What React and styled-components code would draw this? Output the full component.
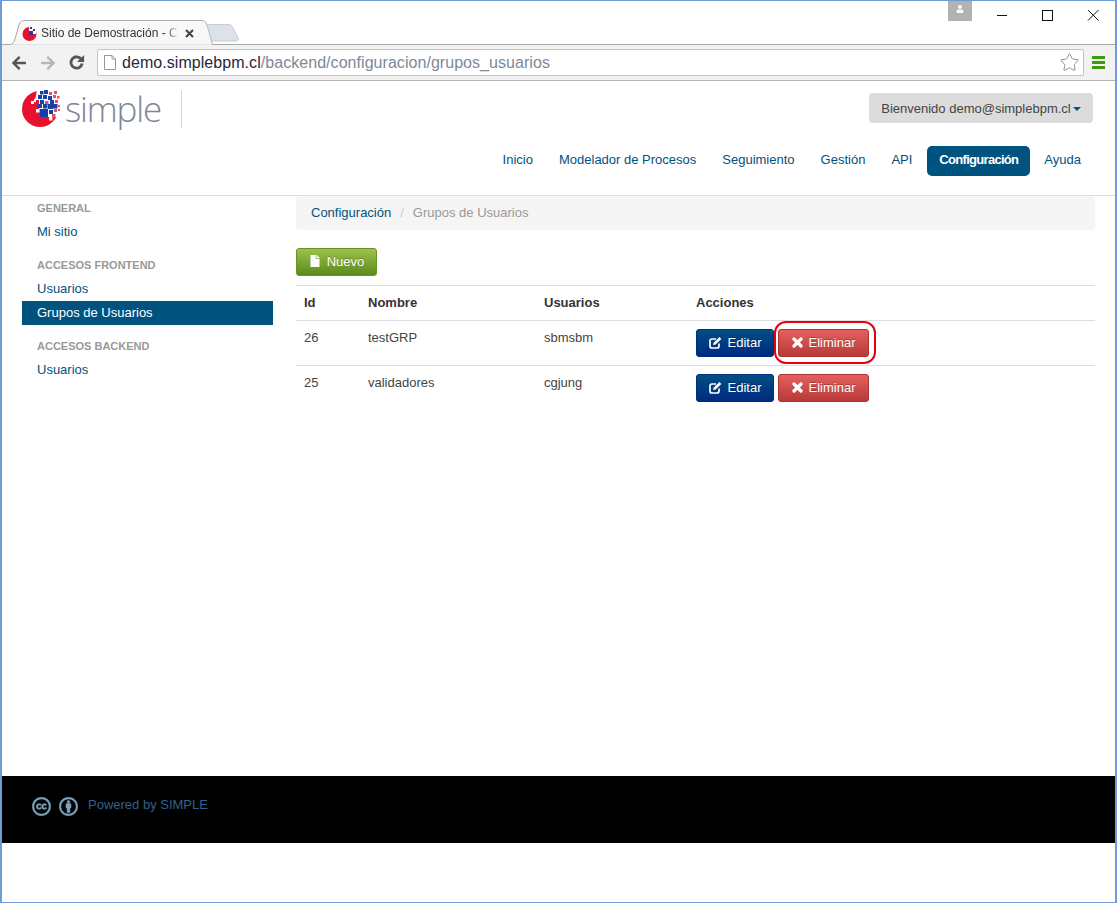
import React from 'react';
import styled, { createGlobalStyle } from 'styled-components';
import { Star } from 'lucide-react';
import { FaArrowLeft, FaArrowRight, FaCreativeCommons, FaCreativeCommonsBy, FaFile, FaUser } from 'react-icons/fa';

const navItems = ['Inicio', 'Modelador de Procesos', 'Seguimiento', 'Gestión', 'API', 'Configuración', 'Ayuda'];

const groups = [
    { id: 26, nombre: 'testGRP', usuarios: 'sbmsbm', marked: true },
    { id: 25, nombre: 'validadores', usuarios: 'cgjung', marked: false },
];

// logo squares: x, y, size, colour
const BLUE = '#1a3fa8';
const PINK = '#ee5068';
const pixels = [
    [18, 1, 3.5, BLUE], [22, 0, 4, BLUE], [27, 2, 3, PINK], [32, 1, 3, PINK],
    [16, 5, 4, BLUE], [21, 5, 4, BLUE], [26, 6, 4, BLUE], [31, 5, 3, PINK], [35, 6, 2.5, PINK],
    [14, 10, 3, '#c51f45'], [18, 10, 4, BLUE], [23, 11, 3.5, PINK], [28, 10, 4, BLUE], [33, 10, 3, PINK],
    [16, 14, 4, BLUE], [21, 14, 4.5, BLUE], [26, 14, 5, BLUE], [31, 14, 4.5, BLUE], [36, 15, 2, PINK],
    [27, 20, 4, BLUE], [32, 19, 3, PINK], [36, 19, 2, PINK], [30, 24, 3.5, PINK],
];

const GlobalStyle = createGlobalStyle`
    html, body {
        margin: 0;
        padding: 0;
        background: #fff;
    }

    body {
        font-family: "Liberation Sans", Arial, sans-serif;
        font-size: 13px;
        color: #333;
    }
`;

const Frame = styled.div`
    box-sizing: border-box;
    width: 1117px;
    height: 903px;
    display: flex;
    flex-direction: column;
    border: 1px solid #6f9bd9;
    border-width: 1px 2px 1px 2px;
    background: #fff;
`;

const TitleBar = styled.div`
    height: 43px;
    flex: none;
    display: flex;
    align-items: flex-end;
    padding-left: 6px;
    position: relative;
`;

const TabShape = styled.svg`
    position: absolute;
    left: 5px;
    bottom: -1px;
`;

const NewTab = styled.svg`
    position: absolute;
    left: 204px;
    bottom: 2px;
`;

const Tab = styled.div`
    position: relative;
    height: 24px;
    box-sizing: border-box;
    padding-top: 2px;
    margin-left: 14px;
    display: flex;
    align-items: center;
    gap: 4px;
    font-size: 12px;
    color: #333;
`;

const TabTitle = styled.span`
    width: 137px;
    overflow: hidden;
    white-space: nowrap;
    -webkit-mask-image: linear-gradient(to right, #000 126px, transparent 137px);
    mask-image: linear-gradient(to right, #000 126px, transparent 137px);
`;

const TabClose = styled.svg`
    margin-left: 3px;
`;

const WindowControls = styled.div`
    position: absolute;
    top: 0;
    right: 0;
    display: flex;
    align-items: flex-start;
`;

const Profile = styled.div`
    width: 24px;
    height: 20px;
    margin-right: 5px;
    background: #b2b2b2;
    color: #fff;
    display: flex;
    justify-content: center;
    padding-top: 4px;
    box-sizing: border-box;
    font-size: 8px;
`;

const WindowButton = styled.svg`
    display: block;
    width: 46px;
    height: 28px;
`;

const Toolbar = styled.div`
    height: 37px;
    flex: none;
    box-sizing: border-box;
    display: flex;
    align-items: center;
    padding: 0 10px 0 9px;
    background: #f2f2f2;
    border-top: 1px solid #a9a9a9;
    border-bottom: 1px solid #b4b4b4;
`;

const ToolIcon = styled.span`
    width: 28.7px;
    flex: none;
    display: flex;
    align-items: center;
    color: ${p => p.$muted ? '#b5b5b5' : '#555'};
    font-size: 16px;
`;

const AddressBar = styled.div`
    flex: 1;
    height: 27px;
    box-sizing: border-box;
    margin-right: 8px;
    display: flex;
    align-items: center;
    padding: 0 3px 0 6px;
    background: #fff;
    border: 1px solid #c4c4c4;
    border-radius: 2px;
    font-size: 16px;
    letter-spacing: 0.05px;
`;

const Host = styled.span`
    color: #1f2a38;
    margin-left: 6px;
`;

const UrlPath = styled.span`
    color: #7c8a99;
    flex: 1;
`;

const StarIcon = styled(Star)`
    color: #8d8d8d;
`;

const Menu = styled.div`
    width: 13px;
    display: flex;
    flex-direction: column;
    gap: 2px;

    i {
        display: block;
        height: 3px;
        background: #3f9a0c;
    }
`;

const Header = styled.header`
    height: 115px;
    flex: none;
    box-sizing: border-box;
    padding: 9px 22px 0 20px;
    border-bottom: 1px solid #ddd;
`;

const TopRow = styled.div`
    display: flex;
    align-items: flex-start;
    justify-content: space-between;
`;

const Logo = styled.div`
    display: flex;
    align-items: center;
    height: 38px;
`;

const LogoText = styled.span`
    font-family: "Open Sans", sans-serif;
    font-weight: 300;
    font-size: 35px;
    letter-spacing: -1.2px;
    line-height: 37px;
    padding-bottom: 1px;
    color: #7f8696;
    margin-left: 3px;
    padding-right: 20px;
    border-right: 1px solid #d5d5d5;
`;

const UserButton = styled.div`
    margin-top: 3px;
    height: 30px;
    width: 224px;
    box-sizing: border-box;
    display: flex;
    align-items: center;
    justify-content: center;
    background: #dcdcdc;
    border-radius: 4px;
    color: #444;
`;

const Caret = styled.span`
    margin-left: 2px;
    margin-top: 2px;
    border-top: 4px solid #00527f;
    border-left: 4px solid transparent;
    border-right: 4px solid transparent;
`;

const Nav = styled.nav`
    display: flex;
    justify-content: flex-end;
    gap: 2px;
    margin-top: 18px;
`;

const NavItem = styled.a`
    height: 30px;
    box-sizing: border-box;
    padding: 0 12px;
    margin-left: ${p => p.$active ? '1px' : '0'};
    line-height: 28px;
    border-radius: 5px;
    color: ${p => p.$active ? '#fff' : '#00527f'};
    background: ${p => p.$active ? '#00527f' : 'transparent'};
    font-weight: ${p => p.$active ? 'bold' : 'normal'};
    letter-spacing: ${p => p.$active ? '-0.7px' : '0'};
`;

const Body = styled.div`
    flex: 1;
    display: flex;
    gap: 23px;
    padding: 0 20px;
`;

const Sidebar = styled.aside`
    width: 251px;
    flex: none;
    padding-top: 4px;
`;

const SideTitle = styled.div`
    height: 16px;
    line-height: 16px;
    margin-top: ${p => p.$first ? '0' : '13px'};
    padding-left: 15px;
    font-size: 11px;
    font-weight: bold;
    color: #999;
`;

const SideLink = styled.a`
    display: block;
    height: 24px;
    line-height: 24px;
    margin-top: ${p => p.$tight ? '0' : '4px'};
    padding-left: 15px;
    color: ${p => p.$active ? '#fff' : '#00527f'};
    background: ${p => p.$active ? '#00527f' : 'transparent'};
`;

const Main = styled.main`
    flex: 1;
`;

const Breadcrumb = styled.div`
    height: 34px;
    box-sizing: border-box;
    display: flex;
    align-items: center;
    padding: 0 0 2px 15px;
    background: #f5f5f5;
    border-radius: 4px;
    color: #999;
`;

const Crumb = styled.a`
    color: #00527f;
`;

const Divider = styled.span`
    color: #ccc;
    margin: 0 9px;
`;

const Button = styled.a`
    display: inline-flex;
    align-items: center;
    justify-content: center;
    box-sizing: border-box;
    gap: 6px;
    height: 28px;
    padding-bottom: 2px;
    border-radius: 3px;
    color: #fff;
    font-size: 13px;
    text-shadow: 0 -1px 0 rgba(0, 0, 0, 0.25);
    border: 1px solid ${p => p.$border};
    background: linear-gradient(to bottom, ${p => p.$from}, ${p => p.$to});
    width: ${p => p.$width}px;
`;

const FileIcon = styled(FaFile)`
    font-size: 12px;
`;

const Toolrow = styled.div`
    margin-top: 18px;
    height: 37px;
`;

const Table = styled.table`
    width: 100%;
    border-collapse: collapse;
    font-size: 13px;

    th {
        text-align: left;
        height: 35px;
        padding: 0 8px 2px;
        box-sizing: border-box;
        font-weight: bold;
        border-top: 1px solid #ddd;
        color: #333;
    }

    td {
        height: 45px;
        padding: 9px 8px 0;
        box-sizing: border-box;
        vertical-align: top;
        border-top: 1px solid #ddd;
        color: #444;
    }
`;

const IdHead = styled.th`
    width: 64px;
`;

const NameHead = styled.th`
    width: 176px;
`;

const UsersHead = styled.th`
    width: 152px;
`;

const Actions = styled.div`
    display: flex;
    gap: 4px;
    margin-top: -1px;
`;

const Marked = styled.div`
    position: relative;

    &::after {
        content: '';
        position: absolute;
        inset: -8px -7px -7px -4px;
        border: 2px solid #e8000d;
        border-radius: 12px;
    }
`;

const Footer = styled.footer`
    height: 67px;
    flex: none;
    margin-bottom: 59px;
    box-sizing: border-box;
    display: flex;
    align-items: flex-start;
    padding: 21px 0 0 30px;
    background: #000;
    color: #31618f;
`;

const LicenseIcons = styled.div`
    display: flex;
    gap: 8px;
    margin-right: 10px;
    font-size: 19px;
    color: #7ba3bf;

    svg {
        stroke: currentColor;
        stroke-width: 14;
    }
`;

const Logomark = () => (
    <svg width="40" height="38" viewBox="0 0 40 38">
        <circle cx="18" cy="19" r="18" fill="#e8112d" />
        <path d="M15 0 H40 V27 H26 V19 H17 V10 H13 Z" fill="#fff" />
        <rect x="12" y="9" width="3" height="3" fill="#fff" />
        <rect x="9" y="11" width="3" height="3" fill="#fff" />
        <rect x="14" y="19" width="3.5" height="3.5" fill="#fff" />
        <rect x="27" y="27" width="3.5" height="3.5" fill="#fff" />
        {pixels.map(([x, y, size, fill]) => (
            <rect key={`${x}-${y}`} x={x} y={y} width={size} height={size} fill={fill} />
        ))}
        <rect x="18" y="19" width="8" height="8" fill="#0f3fa8" />
    </svg>
);

const Favicon = () => (
    <svg width="15" height="15" viewBox="0 0 15 15">
        <circle cx="7.5" cy="8" r="7" fill="#e8112d" />
        <rect x="7" y="1" width="7" height="7" fill="#fff" />
        <rect x="8" y="1" width="2" height="2" fill="#1c3f9e" />
        <rect x="11" y="3" width="2" height="2" fill="#1c3f9e" />
        <rect x="7" y="5" width="4" height="4" fill="#1c3f9e" />
    </svg>
);

const EditIcon = () => (
    <svg width="13" height="13" viewBox="0 0 13 13">
        <path d="M10 7.5 V10 A2 2 0 0 1 8 12 H3 A2 2 0 0 1 1 10 V5 A2 2 0 0 1 3 3 H7" fill="none" stroke="#fff" strokeWidth="1.7" />
        <path d="M4 9 L4.6 6.8 L10.4 1 L12.4 3 L6.6 8.6 Z" fill="#fff" />
    </svg>
);

const CrossIcon = () => (
    <svg width="11" height="11" viewBox="0 0 11 11">
        <path d="M2 2 L9 9 M9 2 L2 9" stroke="#fff" strokeWidth="3.2" strokeLinecap="round" />
    </svg>
);

const App = () => {
    const renderActions = row => {
        const remove = (
            <Button $width={91} $border="#a93533" $from="#e4605e" $to="#b73a38">
                <CrossIcon /> Eliminar
            </Button>
        );
        return (
            <Actions>
                <Button $width={78} $border="#00307a" $from="#004f83" $to="#002a80">
                    <EditIcon /> Editar
                </Button>
                {row.marked ? <Marked>{remove}</Marked> : remove}
            </Actions>
        );
    };

    return (
        <Frame>
            <GlobalStyle />
            <TitleBar>
                <TabShape width="206" height="25" viewBox="0 0 206 25">
                    <path d="M0 24.5 H3 C6 24.5 7 22 8 19 L12 5 C13 2 14 .5 18 .5 H194 C198 .5 199 2 200 5 L204 19 C205 22 205 24.5 206 24.5" fill="#f8f8f8" stroke="#a9a9a9" />
                    <path d="M4 25 H205" stroke="#f8f8f8" />
                </TabShape>
                <NewTab width="34" height="18" viewBox="0 0 34 18">
                    <path d="M1 .5 H22 C25 .5 26 2 27 4 L32 14 C33 16 32 17 30 17 H8 C6 17 5 16 5 14 Z" fill="#dde1e8" stroke="#c8ccd3" />
                </NewTab>
                <Tab>
                    <Favicon />
                    <TabTitle>Sitio de Demostración - C</TabTitle>
                    <TabClose width="9" height="9" viewBox="0 0 9 9">
                        <path d="M1 1 L8 8 M8 1 L1 8" stroke="#444" strokeWidth="2" />
                    </TabClose>
                </Tab>
                <WindowControls>
                    <Profile><FaUser /></Profile>
                    <WindowButton viewBox="0 0 46 28">
                        <path d="M20 14.5 H30" stroke="#111" />
                    </WindowButton>
                    <WindowButton viewBox="0 0 46 28">
                        <rect x="19.5" y="9.5" width="10" height="10" fill="none" stroke="#111" />
                    </WindowButton>
                    <WindowButton viewBox="0 0 46 28">
                        <path d="M19 9 L29.5 19.5 M29.5 9 L19 19.5" stroke="#111" />
                    </WindowButton>
                </WindowControls>
            </TitleBar>
            <Toolbar>
                <ToolIcon><FaArrowLeft /></ToolIcon>
                <ToolIcon $muted><FaArrowRight /></ToolIcon>
                <ToolIcon>
                    <svg width="17" height="17" viewBox="0 0 18 18">
                        <path d="M14 5.5 A6 6 0 1 0 15 10" fill="none" stroke="#555" strokeWidth="3" />
                        <path d="M17 1 V8.5 H9.5 Z" fill="#555" />
                    </svg>
                </ToolIcon>
                <AddressBar>
                    <svg width="12" height="15" viewBox="0 0 12 15">
                        <path d="M.5 .5 H8 L11.5 4 V14.5 H.5 Z M8 .5 V4 H11.5" fill="#fff" stroke="#999" />
                    </svg>
                    <Host>demo.simplebpm.cl</Host>
                    <UrlPath>/backend/configuracion/grupos_usuarios</UrlPath>
                    <StarIcon size={21} strokeWidth={1.1} />
                </AddressBar>
                <Menu><i /><i /><i /></Menu>
            </Toolbar>
            <Header>
                <TopRow>
                    <Logo>
                        <Logomark />
                        <LogoText>simple</LogoText>
                    </Logo>
                    <UserButton>Bienvenido demo@simplebpm.cl<Caret /></UserButton>
                </TopRow>
                <Nav>
                    {navItems.map(item => (
                        <NavItem key={item} $active={item === 'Configuración'}>{item}</NavItem>
                    ))}
                </Nav>
            </Header>
            <Body>
                <Sidebar>
                    <SideTitle $first>GENERAL</SideTitle>
                    <SideLink>Mi sitio</SideLink>
                    <SideTitle>ACCESOS FRONTEND</SideTitle>
                    <SideLink>Usuarios</SideLink>
                    <SideLink $tight $active>Grupos de Usuarios</SideLink>
                    <SideTitle>ACCESOS BACKEND</SideTitle>
                    <SideLink>Usuarios</SideLink>
                </Sidebar>
                <Main>
                    <Breadcrumb>
                        <Crumb>Configuración</Crumb>
                        <Divider>/</Divider>
                        Grupos de Usuarios
                    </Breadcrumb>
                    <Toolrow>
                        <Button $width={81} $border="#6a9226" $from="#9cc24a" $to="#5c8a1c">
                            <FileIcon /> Nuevo
                        </Button>
                    </Toolrow>
                    <Table>
                        <thead>
                            <tr>
                                <IdHead>Id</IdHead>
                                <NameHead>Nombre</NameHead>
                                <UsersHead>Usuarios</UsersHead>
                                <th>Acciones</th>
                            </tr>
                        </thead>
                        <tbody>
                            {groups.map(row => (
                                <tr key={row.id}>
                                    <td>{row.id}</td>
                                    <td>{row.nombre}</td>
                                    <td>{row.usuarios}</td>
                                    <td>{renderActions(row)}</td>
                                </tr>
                            ))}
                        </tbody>
                    </Table>
                </Main>
            </Body>
            <Footer>
                <LicenseIcons>
                    <FaCreativeCommons />
                    <FaCreativeCommonsBy />
                </LicenseIcons>
                Powered by SIMPLE
            </Footer>
        </Frame>
    );
};

export default App;
